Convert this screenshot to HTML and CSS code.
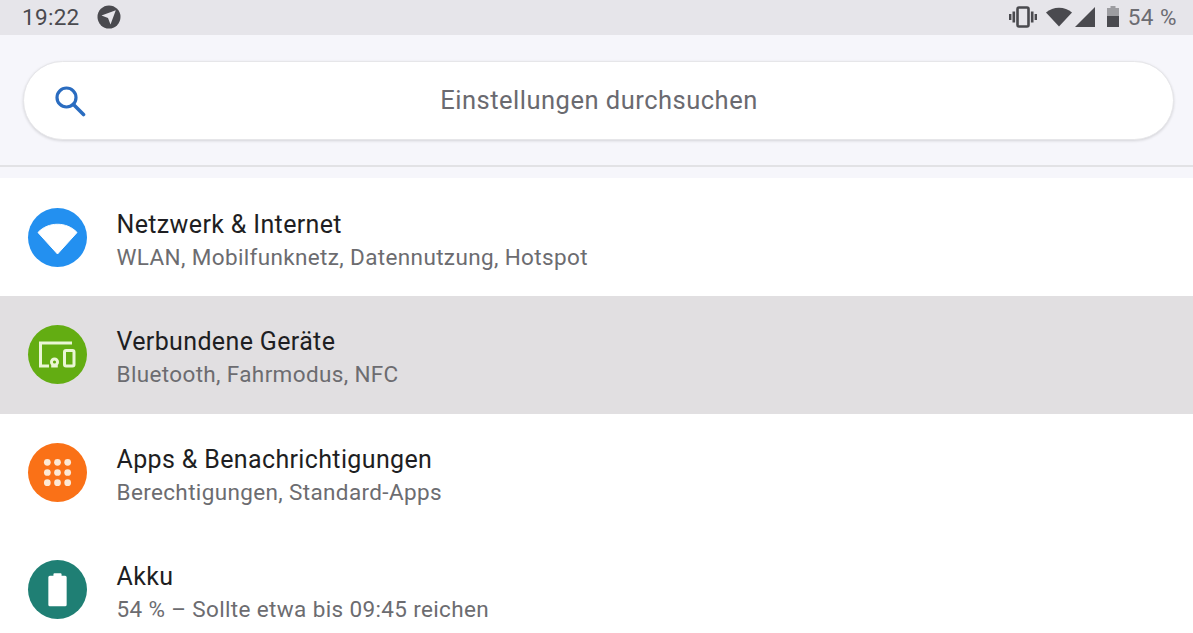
FILE: index.html
```html
<!DOCTYPE html>
<html lang="de">
<head>
<meta charset="utf-8">
<title>Einstellungen</title>
<link rel="stylesheet" href="styles.css">
</head>
<body>
<div class="status">
  <div class="status-left">
    <span class="time">19:22</span>
    <svg class="nav" viewBox="0 0 24 24" width="24" height="24"><circle cx="12" cy="12" r="11.5" fill="#4a4a4f"/><path d="M18.8 5.200 L4.500 10.500 L11 13 L13.500 19.600 Z" fill="#e6e5ea"/></svg>
  </div>
  <div class="status-right">
    <svg class="s-vib" viewBox="0 0 28 22" width="28" height="22"><rect x="8.500" y="1.500" width="11" height="19" rx="1.500" fill="none" stroke="#4a4a4f" stroke-width="2.600"/><path d="M3.500 5.500h2.600v11H3.500zM21.900 5.500h2.600v11h-2.600zM0 8h2.400v6H0zM25.600 8h2.400v6h-2.400z" fill="#4a4a4f"/></svg>
    <svg class="s-wifi" viewBox="0 0 26 20" width="26" height="20"><path d="M0 5.500 C7 -1 19 -1 26 5.500 L13 19.500 Z" fill="#4a4a4f"/></svg>
    <svg class="s-sig" viewBox="0 0 20 20" width="20" height="20"><path d="M0 20 L20 0 V20 Z" fill="#4a4a4f"/></svg>
    <svg class="s-bat" viewBox="0 0 12 21" width="12" height="21"><path d="M3.500 0h5v2h3.500v8H0V2h3.500z" fill="#9d9da1"/><rect y="10" width="12" height="11" fill="#4a4a4f"/></svg>
    <span class="pct">54 %</span>
  </div>
</div>
<div class="search-area">
  <div class="search">
    <svg class="search-icon" viewBox="0 0 32 32" width="32" height="32"><circle cx="12.500" cy="12.500" r="9.500" fill="none" stroke="#2a6cc0" stroke-width="3.200"/><path d="M19.500 19.500 L29.500 29.500" stroke="#2a6cc0" stroke-width="3.600" stroke-linecap="round"/></svg>
    <span class="search-text">Einstellungen durchsuchen</span>
  </div>
</div>
<div class="gap"></div>
<ul class="list">
  <li class="row">
    <span class="ic blue"><svg viewBox="0 0 59 59" width="59" height="59"><path d="M10 24.500 C20 13.500 39 13.500 49 24.500 L29.500 46 Z" fill="#fff" stroke="#fff" stroke-width="1" stroke-linejoin="round"/></svg></span>
    <div class="txt"><div class="t">Netzwerk &amp; Internet</div><div class="d">WLAN, Mobilfunknetz, Datennutzung, Hotspot</div></div>
  </li>
  <li class="row active">
    <span class="ic green"><svg viewBox="0 0 59 59" width="59" height="59"><path d="M44 18 H12.500 V41 H21" fill="none" stroke="#eaf6d5" stroke-width="3"/><rect x="36.500" y="25.500" width="9.500" height="15.500" rx="1.500" fill="none" stroke="#eaf6d5" stroke-width="3"/><path d="M22 37 a4.500 4.500 0 0 1 9 0 q0 1.800-1.200 3 V42.500 h-6.600 V40 q-1.200-1.200-1.200-3z" fill="#eaf6d5"/><circle cx="26.500" cy="37" r="1.600" fill="#63ad12"/></svg></span>
    <div class="txt"><div class="t">Verbundene Geräte</div><div class="d">Bluetooth, Fahrmodus, NFC</div></div>
  </li>
  <li class="row">
    <span class="ic orange"><svg viewBox="0 0 58 58" width="59" height="59" fill="#fde9d5"><circle cx="19" cy="19" r="3.300"/><circle cx="29" cy="19" r="3.300"/><circle cx="39" cy="19" r="3.300"/><circle cx="19" cy="29" r="3.300"/><circle cx="29" cy="29" r="3.300"/><circle cx="39" cy="29" r="3.300"/><circle cx="19" cy="39" r="3.300"/><circle cx="29" cy="39" r="3.300"/><circle cx="39" cy="39" r="3.300"/></svg></span>
    <div class="txt"><div class="t">Apps &amp; Benachrichtigungen</div><div class="d">Berechtigungen, Standard-Apps</div></div>
  </li>
  <li class="row">
    <span class="ic teal"><svg viewBox="0 0 58 58" width="59" height="59"><path d="M25 14 a1 1 0 0 1 1-1 h6 a1 1 0 0 1 1 1 v1.500 h3.500 a1.500 1.500 0 0 1 1.500 1.500 V44 a1.500 1.500 0 0 1-1.500 1.500 h-15 A1.500 1.500 0 0 1 20 44 V17 a1.500 1.500 0 0 1 1.500-1.500 H25z" fill="#fff"/></svg></span>
    <div class="txt"><div class="t">Akku</div><div class="d">54 % – Sollte etwa bis 09:45 reichen</div></div>
  </li>
</ul>
</body>
</html>
```
FILE: styles.css
```css
html, body { margin: 0; padding: 0; }
body {
  width: 1193px;
  height: 633px;
  overflow: hidden;
  background: #fdfdff;
  font-family: Roboto, "Liberation Sans", sans-serif;
}
.status {
  height: 35px;
  background: #e6e5ea;
  display: flex;
  justify-content: space-between;
  align-items: center;
  padding: 0 16px 2px 22px;
  box-sizing: border-box;
  color: #4a4a4f;
}
.status-left, .status-right { display: flex; align-items: center; }
.time { font-size: 22.5px; letter-spacing: 0.3px; }
.nav { margin-left: 17px; }
.s-vib { margin-right: 9px; }
.s-wifi { margin-right: 3px; }
.s-sig { margin-right: 12px; }
.s-bat { margin-right: 9px; }
.pct { font-size: 22.5px; color: #6c6c72; letter-spacing: 0.5px; }
.search-area {
  height: 132px;
  box-sizing: border-box;
  background: #f6f6fb;
  border-bottom: 2px solid #e2e2e5;
  padding: 26px 19px 0 23px;
}
.search {
  height: 79px;
  box-sizing: border-box;
  background: #fff;
  border-radius: 40px;
  border: 1px solid #e6e6e9;
  box-shadow: 0 1px 3px rgba(0,0,0,.14);
  display: flex;
  align-items: center;
  padding-left: 30px;
}
.search-icon { flex: none; }
.search-text {
  flex: 1;
  text-align: center;
  margin-right: 61px;
  margin-bottom: 2px;
  font-size: 25.5px;
  color: #6a6a70;
  letter-spacing: 0.5px;
}
.gap { height: 11px; background: #f6f6fb; }
.list { list-style: none; margin: 0; padding: 1px 0 0; background: #fff; }
.row {
  height: 117.300px;
  display: flex;
  align-items: center;
  padding-left: 28px;
  box-sizing: border-box;
}
.row.active { background: #e1dfe1; }
.ic {
  width: 59px;
  height: 59px;
  border-radius: 50%;
  flex: none;
  margin-right: 29.500px;
}
.ic svg { display: block; }
.blue { background: #2390f0; }
.green { background: #63ad12; }
.orange { background: #fa7117; }
.teal { background: #1f7f74; }
.txt { padding-top: 6px; }
.t { font-size: 25px; line-height: 32px; color: #1e1e22; letter-spacing: 0.36px; padding-top: 1px; }
.d { font-size: 22.5px; line-height: 32px; color: #6c6c70; letter-spacing: 0.36px; }
```
